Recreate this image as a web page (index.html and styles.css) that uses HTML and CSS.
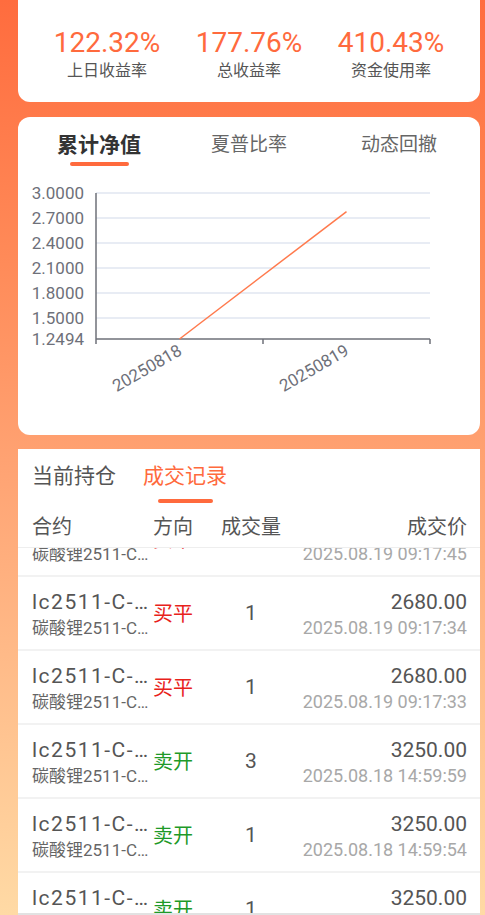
FILE: index.html
```html
<!DOCTYPE html>
<html lang="zh-CN">
<head>
<meta charset="utf-8">
<title>交易记录</title>
<link rel="stylesheet" href="styles.css">
</head>
<body>
<div class="card stats">
  <div class="stat"><div class="stat-val">122.32%</div><div class="stat-lbl">上日收益率</div></div>
  <div class="stat"><div class="stat-val">177.76%</div><div class="stat-lbl">总收益率</div></div>
  <div class="stat"><div class="stat-val">410.43%</div><div class="stat-lbl">资金使用率</div></div>
</div>

<div class="card chart">
  <div class="chart-tabs">
    <div class="ctab active"><span>累计净值</span><i class="bar"></i></div>
    <div class="ctab"><span>夏普比率</span></div>
    <div class="ctab"><span>动态回撤</span></div>
  </div>
  <svg class="plot" width="462" height="260" viewBox="0 0 462 260" xmlns="http://www.w3.org/2000/svg">
    <g stroke="#e0e6f1" stroke-width="1.5">
      <line x1="78" y1="18.1" x2="412" y2="18.1"/>
      <line x1="78" y1="43.1" x2="412" y2="43.1"/>
      <line x1="78" y1="68.1" x2="412" y2="68.1"/>
      <line x1="78" y1="93.1" x2="412" y2="93.1"/>
      <line x1="78" y1="118.1" x2="412" y2="118.1"/>
      <line x1="78" y1="143.1" x2="412" y2="143.1"/>
    </g>
    <g stroke="#6e7079" stroke-width="1.5" fill="none">
      <line x1="78" y1="18" x2="78" y2="164"/>
      <line x1="78" y1="164" x2="412" y2="164"/>
      <line x1="78" y1="164" x2="78" y2="169"/>
      <line x1="245" y1="164" x2="245" y2="169"/>
      <line x1="412" y1="164" x2="412" y2="169"/>
    </g>
    <g class="axis-lbl" text-anchor="end">
      <text x="66" y="24">3.0000</text>
      <text x="66" y="49">2.7000</text>
      <text x="66" y="74">2.4000</text>
      <text x="66" y="99">2.1000</text>
      <text x="66" y="124">1.8000</text>
      <text x="66" y="149">1.5000</text>
      <text x="66" y="170">1.2494</text>
      <text transform="translate(165 179) rotate(-30)">20250818</text>
      <text transform="translate(332 179) rotate(-30)">20250819</text>
    </g>
    <line x1="161.5" y1="164" x2="328.5" y2="36.6" stroke="#ff7a4d" stroke-width="1.5"/>
  </svg>
</div>

<div class="trades">
  <div class="ttabs">
    <div class="ttab"><span>当前持仓</span></div>
    <div class="ttab active"><span>成交记录</span><i class="bar"></i></div>
  </div>
  <div class="thead grid">
    <div>合约</div>
    <div>方向</div>
    <div class="center">成交量</div>
    <div class="right">成交价</div>
  </div>
  <div class="list">
    <div class="trow grid partial">
      <div class="ccol"><div class="c1">lc2511-C-…</div><div class="c2">碳酸锂2511-C…</div></div>
      <div class="dir buy">买平</div>
      <div class="qty">1</div>
      <div class="pcol"><div class="p1">2680.00</div><div class="p2">2025.08.19 09:17:45</div></div>
    </div>
    <div class="trow grid">
      <div class="ccol"><div class="c1">lc2511-C-…</div><div class="c2">碳酸锂2511-C…</div></div>
      <div class="dir buy">买平</div>
      <div class="qty">1</div>
      <div class="pcol"><div class="p1">2680.00</div><div class="p2">2025.08.19 09:17:34</div></div>
    </div>
    <div class="trow grid">
      <div class="ccol"><div class="c1">lc2511-C-…</div><div class="c2">碳酸锂2511-C…</div></div>
      <div class="dir buy">买平</div>
      <div class="qty">1</div>
      <div class="pcol"><div class="p1">2680.00</div><div class="p2">2025.08.19 09:17:33</div></div>
    </div>
    <div class="trow grid">
      <div class="ccol"><div class="c1">lc2511-C-…</div><div class="c2">碳酸锂2511-C…</div></div>
      <div class="dir sell">卖开</div>
      <div class="qty">3</div>
      <div class="pcol"><div class="p1">3250.00</div><div class="p2">2025.08.18 14:59:59</div></div>
    </div>
    <div class="trow grid">
      <div class="ccol"><div class="c1">lc2511-C-…</div><div class="c2">碳酸锂2511-C…</div></div>
      <div class="dir sell">卖开</div>
      <div class="qty">1</div>
      <div class="pcol"><div class="p1">3250.00</div><div class="p2">2025.08.18 14:59:54</div></div>
    </div>
    <div class="trow grid">
      <div class="ccol"><div class="c1">lc2511-C-…</div><div class="c2">碳酸锂2511-C…</div></div>
      <div class="dir sell">卖开</div>
      <div class="qty">1</div>
      <div class="pcol"><div class="p1">3250.00</div><div class="p2">2025.08.18 14:59:50</div></div>
    </div>
  </div>
</div>
</body>
</html>
```

FILE: styles.css
```css
* { box-sizing: border-box; }
html, body { margin: 0; }
body {
  width: 485px;
  height: 915px;
  overflow: hidden;
  padding: 0 5px 0 18px;
  display: flex;
  flex-direction: column;
  font-family: Roboto, "Noto Sans CJK SC", sans-serif;
  background: linear-gradient(180deg, #ff6c3e 0%, #ff8a58 28%, #ffa474 52%, #ffdaa5 100%);
}
.card { background: #fff; }

/* stats */
.stats {
  border-radius: 0 0 12px 12px;
  display: grid;
  grid-template-columns: repeat(3, 1fr);
  padding: 26px 18px 20px;
  flex: none;
}
.stat { text-align: center; }
.stat-val { font-size: 28px; line-height: 34px; color: #ff6a3d; }
.stat-lbl { font-size: 16px; line-height: 22px; color: #555; }

/* chart */
.chart {
  margin-top: 15px;
  height: 318px;
  border-radius: 12px;
  flex: none;
}
.chart-tabs {
  display: grid;
  grid-template-columns: repeat(3, 1fr);
  align-items: start;
  padding: 14px 6px 0;
}
.ctab {
  display: flex;
  flex-direction: column;
  align-items: center;
  font-size: 19px;
  line-height: 28px;
  color: #666;
}
.ctab.active { font-size: 21px; font-weight: bold; color: #333; }
.ctab .bar {
  display: block;
  width: 59px;
  height: 4px;
  border-radius: 2px;
  background: #ff6a3d;
  margin-top: 3px;
}
.plot { display: block; margin-top: 9px; }
.axis-lbl { font-family: Roboto, sans-serif; font-size: 17px; fill: #6e7079; }

/* trades */
.trades {
  margin-top: 14px;
  flex: 1;
  min-height: 0;
  background: #fff;
  display: flex;
  flex-direction: column;
  border-bottom: 2px solid #e2e2e2;
}
.ttabs {
  display: flex;
  align-items: flex-start;
  gap: 27px;
  padding: 13px 14px 0;
  flex: none;
}
.ttab {
  display: flex;
  flex-direction: column;
  align-items: center;
  font-size: 21px;
  line-height: 28px;
  color: #555;
}
.ttab.active { color: #ff6a3d; }
.ttab .bar {
  display: block;
  width: 55px;
  height: 4px;
  border-radius: 2px;
  background: #ff6a3d;
  margin-top: 9px;
}
.grid {
  display: grid;
  grid-template-columns: 121px 65px 66px 1fr;
  padding: 0 13px 0 14px;
}
.thead {
  height: 45px;
  align-items: center;
  font-size: 20px;
  color: #555;
  border-bottom: 1px solid #eeeeee;
  flex: none;
}
.center { text-align: center; }
.right { text-align: right; }
.list { flex: 1; min-height: 0; overflow: hidden; }
.trow {
  height: 74px;
  border-bottom: 2px solid #f2f2f2;
  align-items: center;
}
.trow.partial { margin-top: -45px; }
.trow.partial .c1,
.trow.partial .p1,
.trow.partial .qty { visibility: hidden; }
.ccol, .pcol { align-self: start; padding-top: 11px; min-width: 0; }
.c1, .c2 {
  width: 118px;
  white-space: nowrap;
  overflow: hidden;
}
.c1 { font-size: 21px; line-height: 28px; color: #555; letter-spacing: 1.5px; }
.c2 { font-size: 17px; line-height: 24px; color: #666; }
.dir { font-size: 20px; line-height: 28px; padding-top: 2px; }
.buy { color: #e8221b; }
.sell { color: #1e9a28; }
.qty { font-size: 21px; line-height: 28px; color: #555; text-align: center; }
.pcol { text-align: right; }
.p1 { font-size: 21px; line-height: 28px; color: #555; }
.p2 { font-size: 18px; line-height: 24px; color: #a8a8a8; }
```
